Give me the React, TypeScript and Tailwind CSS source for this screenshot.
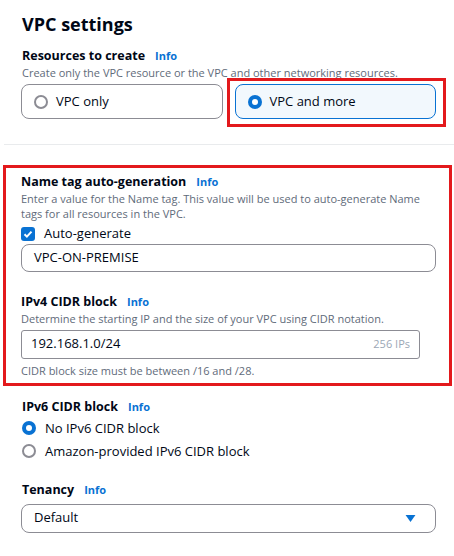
import type { ReactNode } from "react";

function Info() {
  return <span className="ml-[10px] text-[11px] font-bold text-[#0972d3]">Info</span>;
}

function Label({ children }: { children: ReactNode }) {
  return (
    <div className="flex items-baseline text-[12.5px] font-bold leading-[18px] text-[#000716]">
      {children}
      <Info />
    </div>
  );
}

function Desc({ children }: { children: ReactNode }) {
  return <p className="text-[11px] leading-[15px] text-[#5f6b7a]">{children}</p>;
}

function Radio({ checked }: { checked?: boolean }) {
  return checked ? (
    <span className="flex h-[14px] w-[14px] shrink-0 items-center justify-center rounded-full bg-[#0972d3]">
      <span className="h-[6px] w-[6px] rounded-full bg-white" />
    </span>
  ) : (
    <span className="h-[14px] w-[14px] shrink-0 rounded-full border-2 border-[#8c8c94] bg-white" />
  );
}

export default function App() {
  return (
    <div
      className="h-[556px] overflow-hidden bg-white text-[#000716]"
      style={{ fontFamily: '"Open Sans", "Noto Sans", sans-serif' }}
    >
      <div className="pl-[21px] pr-[18px] pt-[11px]">
        <h2 className="pl-px text-[18px] font-bold leading-[26px]">VPC settings</h2>

        <div className="mt-[10px] pl-px">
          <Label>Resources to create</Label>
          <Desc>Create only the VPC resource or the VPC and other networking resources.</Desc>
        </div>
        <div className="mt-[4px] grid grid-cols-2 gap-[12px]">
          <div className="flex h-[35px] items-center gap-[8px] rounded-[8px] border border-[#8c8c94] px-[12px] text-[13px]">
            <Radio />
            VPC only
          </div>
          <div className="relative flex h-[35px] items-center gap-[8px] rounded-[8px] border border-[#0972d3] bg-[#f2f8fd] px-[12px] text-[13px]">
            <Radio checked />
            VPC and more
            <span className="pointer-events-none absolute -bottom-[9px] -left-[9px] -right-[11px] -top-[7px] border-[3px] border-[#e3191c]" />
          </div>
        </div>
      </div>

      <div className="ml-[4px] mt-[25px] h-px bg-[#e9ebed]" />

      <div className="ml-[3px] mr-[2px] mt-[20px] border-[3px] border-[#e3191c] pb-[5px] pl-[15px] pr-[13px] pt-[5px]">
        <Label>Name tag auto-generation</Label>
        <Desc>
          Enter a value for the Name tag. This value will be used to auto-generate Name tags for all
          resources in the VPC.
        </Desc>
        <div className="mt-[3px] flex items-center gap-[9px] text-[13px]">
          <span className="flex h-[14px] w-[14px] items-center justify-center rounded-[3px] bg-[#0972d3]">
            <svg viewBox="0 0 14 14" className="h-[14px] w-[14px]">
              <path d="M3.5 7.2l2.4 2.4 4.6-5" fill="none" stroke="white" strokeWidth="2" />
            </svg>
          </span>
          Auto-generate
        </div>
        <div className="flex h-[28px] items-center rounded-[8px] border border-[#8c8c94] px-[12px] text-[13px]">
          VPC-ON-PREMISE
        </div>

        <div className="mt-[21px]">
          <Label>IPv4 CIDR block</Label>
          <Desc>Determine the starting IP and the size of your VPC using CIDR notation.</Desc>
          <div className="mr-[16px] mt-[4px] flex h-[29px] items-center justify-between rounded-[3px] border border-[#8c8c94] px-[9px] text-[13px]">
            <span>192.168.1.0/24</span>
            <span className="text-[11px] text-[#9ba7b6]">256 IPs</span>
          </div>
          <p className="mt-[4px] text-[11px] leading-[15px] text-[#5f6b7a]">
            CIDR block size must be between /16 and /28.
          </p>
        </div>
      </div>

      <div className="pl-[21px] pr-[18px]">
        <div className="mt-[12px] pl-px">
          <Label>IPv6 CIDR block</Label>
          <div className="mt-[2px] flex items-center gap-[9px] text-[13px] leading-[20px]">
            <Radio checked />
            No IPv6 CIDR block
          </div>
          <div className="mt-[3px] flex items-center gap-[9px] text-[13px] leading-[20px]">
            <Radio />
            Amazon-provided IPv6 CIDR block
          </div>
        </div>

        <div className="mt-[20px]">
          <div className="pl-px">
            <Label>Tenancy</Label>
          </div>
          <div className="mt-[5px] flex h-[29px] items-center justify-between rounded-[8px] border border-[#8c8c94] pl-[12px] pr-[19px] text-[13px]">
            Default
            <svg viewBox="0 0 12 10" className="h-[9px] w-[11px]">
              <path d="M0.5 1h11L6 9z" fill="#0972d3" />
            </svg>
          </div>
        </div>
      </div>
    </div>
  );
}
